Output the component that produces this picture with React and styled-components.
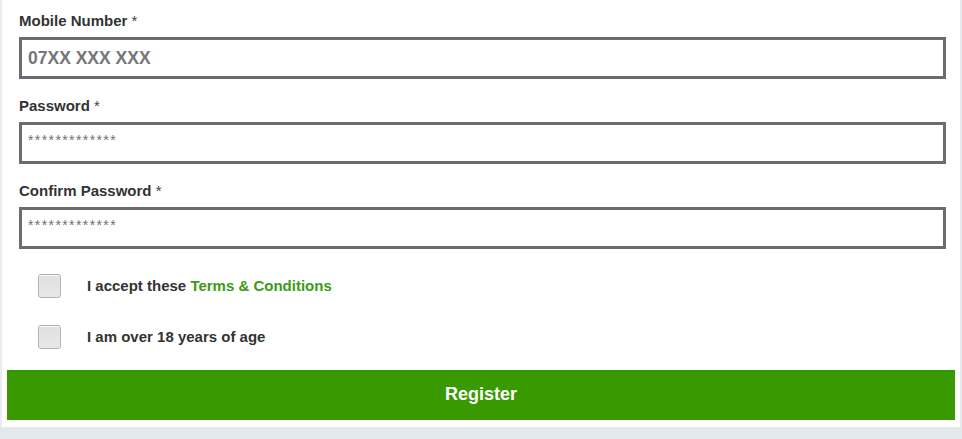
import React from "react";
import styled, { createGlobalStyle } from "styled-components";

const Global = createGlobalStyle`
  html, body { margin: 0; padding: 0; background: #e3e8ec; }
  body { font-family: "Liberation Sans", Arial, sans-serif; }
  * { box-sizing: border-box; }
`;

const Page = styled.div`
  width: 962px;
  min-height: 439px;
  background: #e3e8ec;
`;

const Panel = styled.div`
  background: #ffffff;
  border-left: 2px solid #ececec;
  border-right: 2px solid #e6eaed;
  padding: 11px 5px 7px 5px;
  display: flex;
  flex-direction: column;
`;

const Form = styled.div`
  padding: 0 9px 0 12px;
  display: flex;
  flex-direction: column;
  gap: 17px;
`;

const Field = styled.div`
  display: flex;
  flex-direction: column;
`;

const Label = styled.label`
  font-size: 15px;
  line-height: 20px;
  font-weight: bold;
  color: #333333;
  margin-bottom: 6px;
`;

const Star = styled.span`
  font-weight: normal;
  color: #444;
`;

const Input = styled.div`
  height: 42px;
  border: 3px solid #6b6b71;
  background: #fff;
  padding: ${(p) => (p.$big ? "7px 6px" : "5px 6px")};
  font-size: ${(p) => (p.$big ? "17.5px" : "14px")};
  line-height: ${(p) => (p.$big ? "22px" : "20px")};
  font-weight: ${(p) => (p.$big ? "bold" : "normal")};
  color: ${(p) => (p.$big ? "#75757a" : "#6f6f6f")};
  letter-spacing: ${(p) => (p.$big ? "0" : "1.4px")};
`;

const Checks = styled.div`
  display: flex;
  flex-direction: column;
  gap: 27px;
  margin-top: 8px;
  padding-left: 19px;
`;

const CheckRow = styled.div`
  display: flex;
  align-items: center;
  height: 24px;
  gap: 26px;
`;

const Box = styled.span`
  width: 23px;
  height: 24px;
  border-radius: 3px;
  border: 1px solid #b3b3b3;
  background: linear-gradient(#e0e0e0, #e8e8e8);
  box-shadow: inset 0 1px 1px rgba(255,255,255,0.8);
`;

const CheckText = styled.span`
  font-size: 15px;
  line-height: 18px;
  padding-bottom: 1px;
  font-weight: bold;
  color: #333333;
`;

const Link = styled.span`
  color: #3d9a18;
`;

const Button = styled.div`
  margin-top: 21px;
  height: 50px;
  background: #389a00;
  border-top: 2px solid #2d9600;
  display: flex;
  align-items: center;
  justify-content: center;
  color: #ffffff;
  font-size: 18px;
  font-weight: bold;
  padding-bottom: 4px;
`;

export default function App() {
  return (
    <Page>
      <Global />
      <Panel>
        <Form>
          <Field>
            <Label>Mobile Number <Star>*</Star></Label>
            <Input $big>07XX XXX XXX</Input>
          </Field>
          <Field>
            <Label>Password <Star>*</Star></Label>
            <Input>*************</Input>
          </Field>
          <Field>
            <Label>Confirm Password <Star>*</Star></Label>
            <Input>*************</Input>
          </Field>
          <Checks>
            <CheckRow>
              <Box />
              <CheckText>I accept these <Link>Terms &amp; Conditions</Link></CheckText>
            </CheckRow>
            <CheckRow>
              <Box />
              <CheckText>I am over 18 years of age</CheckText>
            </CheckRow>
          </Checks>
        </Form>
        <Button>Register</Button>
      </Panel>
    </Page>
  );
}
